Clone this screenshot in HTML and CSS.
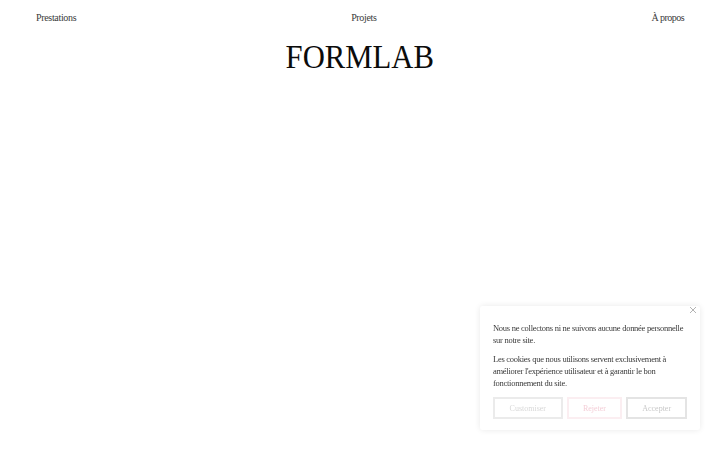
FILE: index.html
```html
<!DOCTYPE html>
<html lang="fr">
<head>
<meta charset="utf-8">
<title>FORMLAB</title>
<link rel="stylesheet" href="styles.css">
</head>
<body>
<header class="header">
  <nav class="nav">
    <a class="nav-link" href="#">Prestations</a>
    <a class="nav-link" href="#">Projets</a>
    <a class="nav-link nav-link-about" href="#">À propos</a>
  </nav>
  <h1 class="logo"><span class="logo-mark">FORMLAB</span></h1>
</header>
<aside class="cookie">
  <button class="close" aria-label="Fermer">
    <svg class="close-icon" viewBox="0 0 8 8"><path d="M1 1l6 6M7 1L1 7"/></svg>
  </button>
  <p class="cookie-text">Nous ne collectons ni ne suivons aucune donnée personnelle sur notre site.</p>
  <p class="cookie-text">Les cookies que nous utilisons servent exclusivement à améliorer l'expérience utilisateur et à garantir le bon fonctionnement du site.</p>
  <div class="actions">
    <button class="btn btn-custom">Customiser</button>
    <button class="btn btn-reject">Rejeter</button>
    <button class="btn btn-accept">Accepter</button>
  </div>
</aside>
</body>
</html>
```
FILE: styles.css
```css
* { box-sizing: border-box; }
html, body { margin: 0; height: 100%; }
body {
  background: #fff;
  color: #222;
  font-family: "Liberation Serif", serif;
  overflow: hidden;
}
.header { padding: 11px 36px 0; }
.nav {
  display: flex;
  justify-content: space-between;
  font-size: 10px;
  line-height: 13px;
  letter-spacing: -0.33px;
}
.nav-link { color: #3a3a3a; text-decoration: none; }
.nav-link-about { letter-spacing: -0.55px; }
.logo {
  margin: 14px 0 0;
  text-align: center;
  font-weight: 400;
  font-size: 33px;
  line-height: 39px;
  color: #0b0b0b;
}
.logo-mark {
  display: inline-block;
  transform: scaleX(0.93);
}
.cookie {
  position: fixed;
  right: 20px;
  bottom: 20px;
  width: 220px;
  height: 124px;
  padding: 16px 13px 0;
  background: #fff;
  border-radius: 3px;
  box-shadow: 0 0 6px rgba(0, 0, 0, 0.09);
}
.close {
  position: absolute;
  top: 0;
  right: 3px;
  width: 8px;
  height: 8px;
  padding: 0;
  border: 0;
  background: none;
  display: flex;
}
.close-icon { width: 8px; height: 8px; stroke: #aaa; stroke-width: 0.9; fill: none; }
.cookie-text {
  margin: 0 0 7px;
  font-size: 8.5px;
  line-height: 12px;
  letter-spacing: -0.27px;
  color: #3a3a3a;
}
.actions { display: flex; gap: 4px; margin-top: 8px; }
.btn {
  height: 22px;
  padding: 0;
  background: #fff;
  font: 8px "Liberation Serif", serif;
  border: 2px solid #ccc;
  color: #ccc;
}
.btn-custom { width: 70px; border-color: #ebebeb; color: #d8d8d8; }
.btn-reject { width: 56px; border-color: #fbeef1; color: #f4cfd8; }
.btn-accept { width: 61px; border-color: #e4e4e4; color: #c8c8c8; }
```
